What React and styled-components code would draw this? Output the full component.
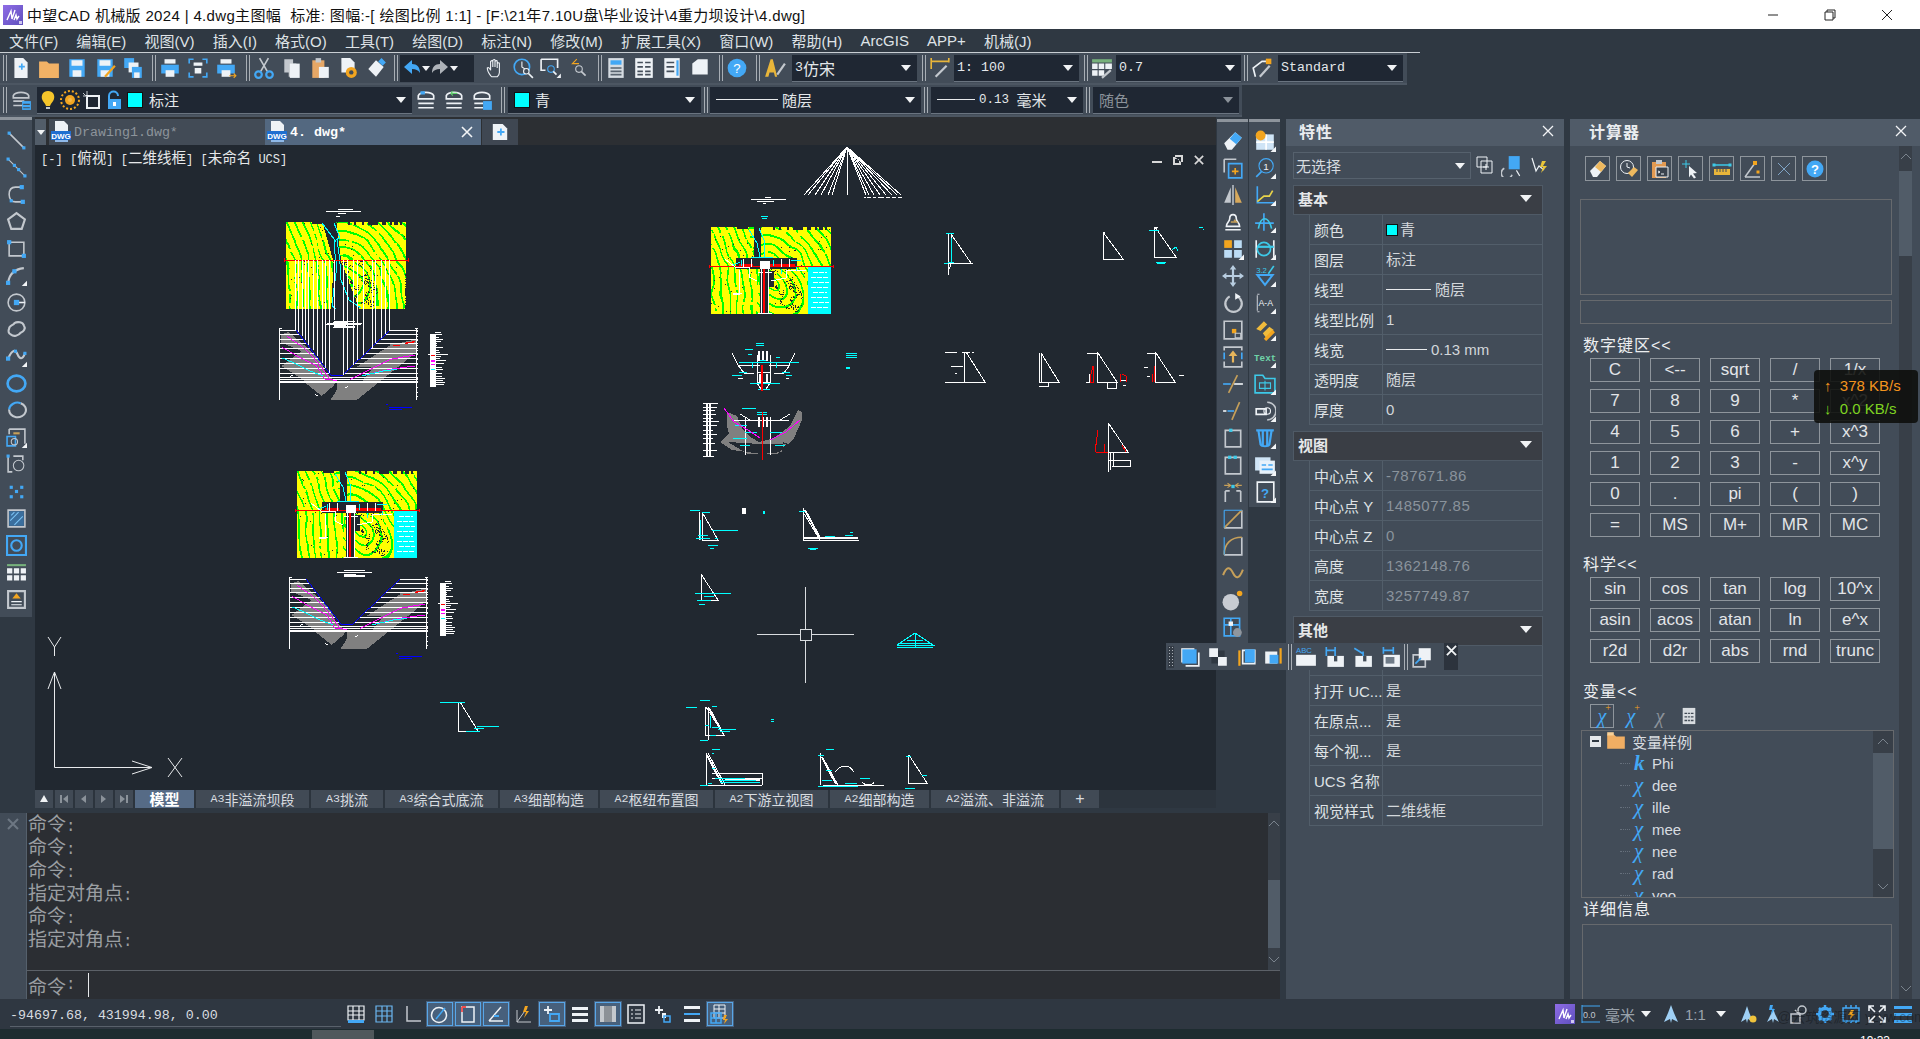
import React, { useMemo } from "react";
import styled, { createGlobalStyle } from "styled-components";

const UI_FONT = `"Liberation Sans", "Noto Sans CJK SC", sans-serif`;
const G = "#c3c8ce";
const B = "#43a8f5";
const W = "#eef2f6";
const O = "#f3a51f";
const T = "#c6a05a";
const C = "#3dc9e8";

const Global = createGlobalStyle`
  html, body { margin: 0; padding: 0; overflow: hidden; background: #2f3842; }
  * { box-sizing: border-box; }
`;

const Shell = styled.div`
  position: relative;
  width: 1920px;
  height: 1039px;
  display: flex;
  flex-direction: column;
  overflow: hidden;
  background: #2f3842;
  font-family: ${UI_FONT};
  color: #d8dce0;
`;

/* ---------- title + menu ---------- */
const TitleBar = styled.div`
  height: 29px;
  background: #fff;
  color: #111;
  display: flex;
  align-items: center;
  font-size: 15px;
  white-space: pre;
  padding-left: 3px;
`;
const TitleText = styled.span`
  margin-left: 4px;
  letter-spacing: 0.34px;
`;
const WinButtons = styled.div`
  margin-left: auto;
  display: flex;
  padding-right: 5px;
`;
const WinButton = styled.div`
  width: 57px;
  display: flex;
  justify-content: center;
`;
const MenuBar = styled.div`
  height: 24px;
  background: #2f3842;
  border-bottom: 1px solid #c9ced3;
  display: flex;
  align-items: center;
  gap: 18.2px;
  padding-left: 9px;
  font-size: 15px;
  color: #dfe3e7;
  width: 1420px;
`;

/* ---------- toolbars ---------- */
const ToolRow = styled.div`
  height: ${p => p.$h}px;
  width: ${p => p.$w}px;
  background: #424c58;
  display: flex;
  align-items: center;
  padding-left: 3px;
  border-bottom: 2px solid #4c5662;
`;
const Sep = styled.div`
  width: 4px;
  height: 26px;
  margin-left: ${p => p.$ml || 0}px;
  border-left: 1px solid #a8aeb5;
  border-right: 1px solid #a8aeb5;
  flex-shrink: 0;
`;
const ToolBtn = styled.div`
  width: 28px;
  height: 28px;
  flex-shrink: 0;
  margin-left: ${p => p.$ml || 0}px;
  display: flex;
  align-items: center;
  justify-content: center;
`;
const UndoGroup = styled.div`
  width: 74px;
  height: 27px;
  margin: 0 0 0 2px;
  background: #202833;
  display: flex;
  align-items: center;
  padding-left: 2px;
  flex-shrink: 0;
`;
const DownTri = styled.i`
  display: block;
  width: 0;
  height: 0;
  border-left: ${p => p.$s || 4}px solid transparent;
  border-right: ${p => p.$s || 4}px solid transparent;
  border-top: ${p => (p.$s || 4) + 1}px solid ${p => p.$c || "#f1f3f5"};
  flex-shrink: 0;
  margin-left: ${p => (p.$auto ? "auto" : "0")};
`;
const Combo = styled.div`
  width: ${p => p.$w}px;
  height: 27px;
  margin-left: ${p => p.$ml || 0}px;
  flex-shrink: 0;
  background: #1f2733;
  border-bottom: 1px solid #6a7480;
  display: flex;
  align-items: center;
  padding: 0 6px 0 ${p => p.$pl || 3}px;
  color: ${p => p.$dim ? "#8b929a" : "#e4e7ea"};
  white-space: pre;
`;
const Swatch = styled.i`
  display: block;
  width: ${p => p.$s || 16}px;
  height: ${p => p.$s || 16}px;
  flex-shrink: 0;
  background: #00ffff;
  border: 1px solid #111;
  margin: 0 ${p => p.$mr || 5}px 0 ${p => p.$ml || 0}px;
`;
const Rule = styled.i`
  display: block;
  width: ${p => p.$w}px;
  height: 1px;
  background: #e8eaec;
  flex-shrink: 0;
  margin-right: 4px;
`;
const LayerIcons = styled.div`
  display: flex;
  gap: 2px;
  margin-right: 3px;
`;

/* ---------- simsun-like text: half-width latin, full-width CJK ---------- */
const HalfRun = styled.span`
  font-family: "Liberation Mono", monospace;
  font-size: ${p => p.$size * 0.833}px;
`;
const FullRun = styled.span`
  font-family: "Noto Sans CJK SC", sans-serif;
  font-size: ${p => p.$size}px;
  font-weight: ${p => p.$bold ? 700 : 400};
`;
const Sim = ({ size = 16, bold, children }) =>
  String(children)
    .split(/([\u3000-\u9fff]+)/)
    .filter(Boolean)
    .map((t, i) =>
      /[\u3000-\u9fff]/.test(t) ? (
        <FullRun key={i} $size={size} $bold={bold}>{t}</FullRun>
      ) : (
        <HalfRun key={i} $size={size}>{t}</HalfRun>
      )
    );

/* ---------- icons ---------- */
const St = ({ d, c = G, w = 1.5, f = "none" }) => <path d={d} stroke={c} strokeWidth={w} fill={f} />;
const Fl = ({ d, c = W }) => <path d={d} fill={c} />;
const Dot = ({ x, y, s = 3, c = B }) => <rect x={x - s / 2} y={y - s / 2} width={s} height={s} fill={c} />;
const Flyout = () => <Fl d="M20 15v5h-5z" c="#f4f6f8" />;

const Ic = ({ s = 22, children, fly }) => (
  <svg width={s} height={s} viewBox="0 0 20 20">
    {children}
    {fly && <Flyout />}
  </svg>
);

const page = (
  <>
    <Fl d="M4 1h8l4 4v14H4z" c={W} />
    <Fl d="M8 8h2V6h1.500v2h2v1.500h-2v2H10v-2H8z" c={B} />
  </>
);
const floppy = (
  <>
    <Fl d="M3 2h14v16H3z" c={B} />
    <Fl d="M5 3h10v5H5zM6 12h8v6H6z" c={W} />
  </>
);
const printer = (
  <>
    <Fl d="M5 2h10v4H5z" c={W} />
    <Fl d="M2 7h16v8H2z" c={B} />
    <Fl d="M6 12h8v6H6z" c={W} />
  </>
);
const tb1 = [
  page,
  <Fl d="M1 4h7l2 2h9v13H1z" c="#f2b266" />,
  floppy,
  <>{floppy}<St d="M19 8L10 18" c={O} w={2} /></>,
  <>
    <Fl d="M2 1h9v9H2z" c={B} />
    <Fl d="M6 5h9v9H6z" c={W} />
    <Fl d="M9 9h9v10H9z" c={B} />
    <Fl d="M11 14h5v5h-5z" c={W} />
  </>,
  "sep:5",
  printer,
  <>
    <St d="M2 6V2h4M14 2h4v4M18 14v4h-4M6 18H2v-4" c={B} />
    <Fl d="M6 5h8v3H6zM7 10h6v5H7z" c={W} />
  </>,
  <>{printer}<St d="M13 17h6M17 15l2 2-2 2" c={O} w={1} /></>,
  "sep:6",
  <>
    <St d="M6 1l7 12M14 1L7 13" c={G} />
    <circle cx="5" cy="16" r="3" fill="none" stroke={B} strokeWidth="2" />
    <circle cx="15" cy="16" r="3" fill="none" stroke={B} strokeWidth="2" />
  </>,
  <>
    <Fl d="M3 2h8v4h3v-2h0v14H7v-4H3z" c={G} />
    <Fl d="M8 6h9v13H8z" c={W} />
  </>,
  <>
    <Fl d="M3 3h11v16H3z" c="#e6a766" />
    <Fl d="M6 1h5v4H6z" c={G} />
    <Fl d="M9 9h9v10H9z" c={W} />
  </>,
  <>
    <Fl d="M4 1h8l4 4v9H4z" c={W} />
    <circle cx="13" cy="14" r="5" fill={O} />
    <circle cx="13" cy="14" r="2" fill="#424c58" />
  </>,
  <>
    <Fl d="M3 11l7-8 7 6-7 9z" c={W} />
    <Fl d="M12 4l3-3 4 4-3 3z" c={B} />
  </>,
  "sep:4",
  "undo",
  <>
    <St d="M6 17c-3-4-3-6-3-7 1-1 2 0 3 2V4c1-1 2-1 2 0v5V3c1-1 2-1 2 0v6V4c1-1 2-1 2 0v6V6c1-1 2-1 2 0v8c0 2-1 3-2 4H7z" c={W} w={1} />
  </>,
  <>
    <circle cx="9" cy="9" r="7" fill="none" stroke={B} strokeWidth="1.500" />
    <St d="M9 4v5l3 2" c={W} w={1} />
    <circle cx="13" cy="13" r="2.500" fill="#424c58" stroke={W} />
    <St d="M15 15l4 4" c={W} />
  </>,
  <>
    <St d="M1 2h15v8M1 2v10h4" c={W} />
    <circle cx="10" cy="11" r="3" fill="none" stroke={B} />
    <St d="M12 13l3 3" c={W} />
    <Fl d="M19 15v4h-4z" />
  </>,
  <>
    <St d="M8 2L4 6h6M6 4l-2 2" c={O} w={1} />
    <circle cx="10" cy="11" r="3" fill="none" stroke={G} />
    <St d="M12 13l4 4" c={G} />
  </>,
  "sep:5",
  <>
    <Fl d="M3 1h14v18H3z" c="#d6dce2" />
    <Fl d="M5 3h10v4H5z" c={B} />
    <St d="M5 10h10M5 13h10M5 16h10" c="#596470" w={1.500} />
  </>,
  <>
    <Fl d="M2 1h16v18H2z" c={W} />
    <St d="M4 5h5M11 5h5M4 9h5M11 9h5M4 13h5M11 13h5M4 16h5M11 16h5" c="#454f5b" />
  </>,
  <>
    <Fl d="M3 1h14v18H3z" c={W} />
    <Fl d="M14 3h2v14h-2z" c={B} />
    <St d="M5 5h7M5 9h7M5 13h7" c="#454f5b" />
  </>,
  <Fl d="M3 6l5-4h9v14H3z" c={W} />,
  "sep:5",
  <>
    <circle cx="10" cy="10" r="8.500" fill={B} />
    <text x="10" y="14.500" textAnchor="middle" fontSize="12" fontFamily="Liberation Sans" fill="#fff">?</text>
  </>,
];

const iconLayers = (
  <>
    <St d="M3 6c2-4 12-4 14 0v2H3zM3 11h10M3 15h10" c={G} />
    <Fl d="M11 11h8v8h-8z" c={B} />
    <St d="M12 14h6M12 17h6" c="#424c58" w={1} />
  </>
);

const leftIcons = [
  <><St d="M3 3l14 14" /><Dot x={3} y={3} /><Dot x={17} y={17} /></>,
  <><St d="M2 2l16 16" c={G} w={1} /><Dot x={2} y={2} /><Dot x={8} y={8} /><Dot x={12} y={12} /><Dot x={18} y={18} /></>,
  <><St d="M15 3H9C4 3 3 7 3 10c0 5 3 7 6 7h8" /><Dot x={15} y={3} s={4} /><Dot x={5} y={16} s={3} /><Dot x={16} y={17} s={4} /></>,
  <St d="M10 2l8 6-3 9H5L2 8z" c={G} w={2} />,
  <><St d="M3 4h14v13H3z" /><Dot x={3} y={4} s={4} /><Dot x={17} y={17} s={4} /></>,
  <><St d="M2 17C3 9 8 4 17 3" w={2} /><Dot x={2} y={17} s={4} /><Dot x={8} y={6} s={4} /><Flyout /></>,
  <><circle cx="10" cy="10" r="8" fill="none" stroke={G} strokeWidth="1.500" /><St d="M10 10h8" c={W} /><Dot x={10} y={10} s={5} /></>,
  <St d="M3 9c0-3 4-3 5-5 3-2 8-1 9 2 2 3 0 6-3 7-2 3-7 4-9 2-3-1-3-4-2-6z" w={2} />,
  <><St d="M2 12c4-9 7-9 9-4s5 5 7-1" w={2} c={G} /><Dot x={2} y={12} s={4} /><Dot x={9} y={5} s={3} /><Dot x={18} y={7} s={3} /><Flyout /></>,
  <ellipse cx="10" cy="10" rx="8.500" ry="7.500" fill="none" stroke={B} strokeWidth="2.500" />,
  <><St d="M14 3a8 7 0 1 1-11 6" w={2} c={G} /><St d="M3 9a8 7 0 0 1 11-6" c={B} w={2} /></>,
  <><St d="M3 2h15v14" /><St d="M3 2v5" /><St d="M1 9h8v9H1z" c={B} /><circle cx="8" cy="14" r="3" fill="none" stroke={G} /><St d="M7 6h6" c={T} w={2} /><Flyout /></>,
  <><St d="M2 2v15h4M2 2" /><Dot x={2} y={2} /><circle cx="12" cy="11" r="5" fill="none" stroke={G} /><St d="M7 2h9v4" /></>,
  <><Dot x={5} y={6} /><Dot x={15} y={6} /><Dot x={10} y={10} /><Dot x={5} y={15} /><Dot x={15} y={15} /></>,
  <><St d="M2 2h16v16H2z" /><Fl d="M3 3h14v14H3z" c="#3b6f9e" /><St d="M4 12L12 4M8 16l8-8M5 7l3-3" c="#7cc4f5" w={1} /></>,
  <><St d="M1 1h18v18H1z" c={B} w={2} /><circle cx="10" cy="10" r="5" fill="none" stroke={B} strokeWidth="2" /></>,
  <><Fl d="M1 2h18v2H1z" c="#77b17c" /><Fl d="M1 6h5v5H1zM7.500 6h5v5h-5zM14 6h5v5h-5zM1 12.500h5v5H1zM7.500 12.500h5v5h-5zM14 12.500h5v5h-5z" c={W} /></>,
  <><St d="M2 2h16v16H2z" w={2} /><St d="M5 12h10M5 15h10" c={W} w={1} /><Fl d="M10 4l4 5H6z" c={O} /></>,
];

const dockA = [
  <><Fl d="M2 12L12 2l6 5-9 11H5z" c={W} /><Fl d="M12 2l6 5-5 6-6-5z" c={B} /></>,
  <><St d="M2 2h11M2 2v12" /><St d="M6 6h12v13H6z" c={B} /><St d="M12 10v6M9 13h6" c={O} /></>,
  <><Fl d="M2 17L8 3v14z" c={G} /><St d="M10 1v18" c={W} w={1} /><Fl d="M12 3l6 14h-6z" c="#d7a95c" /></>,
  <><St d="M3 17h14M4 14c0-4 3-4 3-7 0-5 6-5 6 0 0 3 3 3 3 7z" c={W} /><St d="M8 10h5l-2-2" c={T} /></>,
  <><Fl d="M2 2h7v7H2z" c={O} /><Fl d="M11 2h7v7h-7zM2 11h7v7H2zM11 11h7v7h-7z" c="#bcdcf5" /><Flyout /></>,
  <><St d="M10 2v16M2 10h16" c="#b8cde0" w={2} /><Fl d="M10 0l3 4H7zM10 20l3-4H7zM0 10l4-3v6zM20 10l-4-3v6z" c="#b8cde0" /></>,
  <><St d="M14 4a7.500 7.500 0 1 1-7 0" c={G} w={2} /><Fl d="M12 1l5 3-5 3z" c={W} /></>,
  <><St d="M2 2h16v16H2z" /><Dot x={11} y={11} s={4} c={O} /><St d="M12 13h5v4h-5z" c={G} w={1} /></>,
  <><St d="M2 4V1h16v3M2 14v5h16v-5" /><Fl d="M10 4l4 5h-3v6H9V9H6z" c="#e7b55b" /><St d="M2 6v6M18 6v6" c={B} /></>,
  <><St d="M1 10h7" c={B} w={1.500} /><St d="M11 10h8" c={W} /><St d="M14 2L6 18" c={T} /></>,
  <><St d="M1 10h3" c={W} /><St d="M5 10h6" c={B} /><St d="M16 2L9 18" c={T} /></>,
  <><St d="M3 3h14v15H3z" /><Dot x={8} y={3} c={C} s={3} /></>,
  <><St d="M3 3h14v15H3z" /><Dot x={7} y={3} c={C} s={3} /><Dot x={12} y={3} c={C} s={3} /></>,
  <><St d="M3 9v10M17 9v10M3 9h4M13 9h4" /><St d="M2 4h5M5 2l3 2-3 2M18 4h-5M15 2l-3 2 3 2" c={T} w={1} /><Dot x={10} y={5} c={C} /></>,
  <><St d="M2 18h16V2" c={G} /><St d="M2 18L18 2" c={T} /><St d="M2 2h16M2 2v16" c={B} w={1} /></>,
  <><St d="M18 2v16H2" c={G} /><St d="M2 18C2 8 8 2 18 2" c={T} /><St d="M2 2v16" c={B} w={1} /></>,
  <St d="M1 12c3-8 6-8 9-2s6 5 9-3" c={T} w={1.800} />,
  <><circle cx="8" cy="12" r="7.500" fill="#c8ccd2" /><circle cx="16" cy="4" r="2.500" fill={O} /></>,
  <><St d="M2 2h14v16H2zM8 2v16M2 8h14" c={B} /><Dot x={8} y={7} s={4} c={W} /><circle cx="14" cy="15" r="4" fill="#8f969e" /></>,
];
const dockB = [
  <><Fl d="M2 4h16v14H2z" c="#cfe4f6" /><St d="M2 11h16M11 4v14" c="#fff" /><circle cx="6" cy="5" r="4.500" fill={O} /></>,
  <><circle cx="11" cy="8" r="6.500" fill="none" stroke={B} /><St d="M7 13l-5 5" c={B} /><text x="11" y="11.500" fontSize="9" textAnchor="middle" fill={W} fontFamily="Liberation Sans">1</text></>,
  <><St d="M3 2v15h15" c={B} /><St d="M3 16l6-5h5l3-5" c="#e8d34a" /></>,
  <><St d="M1 11h17M9 2v16" c={B} /><St d="M4 16c2-12 9-12 12 0" c={C} /></>,
  <><St d="M2 2v16M18 2v16" c={W} /><circle cx="9" cy="10" r="6" fill="none" stroke={C} strokeWidth="1.500" /><St d="M3 8h15" c={C} w={2} /></>,
  <><St d="M3 9h14L10 18z" c={B} w={1.800} /><St d="M13 8l5-7" c={C} /><text x="2" y="7" fontSize="7" fill={C} fontFamily="Liberation Sans">3.2</text></>,
  <><St d="M3 2h2M3 18h2M3 3v14" c={G} w={1} /><text x="4" y="13" fontSize="8" fill={W} fontFamily="Liberation Sans">A-A</text></>,
  <><Fl d="M2 9l7-7 3 3-6 6zM8 13l6-6 4 3-7 7z" c="#f0bb3c" /><St d="M10 19L18 11" c={O} w={3} /></>,
  <text x="0" y="14" fontSize="8.500" fontFamily="Liberation Mono" fontWeight="700" fill="#6fd3a8">Text</text>,
  <><St d="M1 2h7l2 3h9v13H1z" c={C} /><St d="M5 9h10v5H5zM10 7v9" c={C} w={1} /></>,
  <><St d="M12 2a8 8 0 1 1 0 16" c={G} /><St d="M2 8h9v5H2z" c={W} /><circle cx="12" cy="10" r="3" fill="none" stroke={W} /></>,
  <><St d="M2 3h16M4 3l2 13c1 2 7 2 8 0l2-13M8 3v14M12 3v14" c={B} w={2} /></>,
  <><Fl d="M1 3h14v12H1z" c="#cfe4f6" /><Fl d="M5 6h14v12H5z" c="#e7f1fa" /><St d="M7 10h4M13 10h4M7 14h10" c={B} /></>,
  <><St d="M3 1h15v18H3z" c={W} /><text x="10" y="15" fontSize="12" fontWeight="700" textAnchor="middle" fill={B} fontFamily="Liberation Sans">?</text></>,
];

const calcIcons = [
  <><Fl d="M2 12L12 2l6 5-9 11H5z" c={W} /><Fl d="M12 2l6 5-5 6-6-5z" c="#eeb95f" /></>,
  <><circle cx="8" cy="8" r="6.500" fill="none" stroke={W} /><St d="M8 4v4l3 1" c={W} w={1} /><Fl d="M9 14l6-6 4 3-6 7z" c="#eeb95f" /></>,
  <><Fl d="M2 3h14v16H2z" c="#e39a52" /><Fl d="M6 1h6v4H6z" c={G} /><Fl d="M6 8h12v10H6z" c="#3a424d" /><St d="M6 8h12v10H6z" c={W} w={1} /><St d="M8 14l2-1-2-1M11 15h3" c={W} w={1} /></>,
  <><St d="M5 1v8M1 5h8" c={C} w={1} /><Fl d="M8 7l8 7-4 .5 3 4-2 1-3-4-2 3z" c={W} /></>,
  <><St d="M1 6h18" c={C} /><Dot x={2} y={6} s={3} c={C} /><Dot x={18} y={6} s={3} c={C} /><Fl d="M2 10h16v6H2z" c="#e8b53a" /><St d="M5 10v3M8 10v3M11 10v3M14 10v3" c="#424c58" w={1} /></>,
  <><St d="M2 18L12 4" c={G} /><St d="M2 18h15" c={G} /><Dot x={12} y={4} s={4} c={O} /><Dot x={15} y={13} s={3} c={O} /></>,
  <St d="M4 4l12 12M16 4L4 16" c="#7fa3c4" w={1} />,
  <><circle cx="10" cy="10" r="8.500" fill={B} /><text x="10" y="15" textAnchor="middle" fontSize="13" fontWeight="700" fontFamily="Liberation Sans" fill="#fff">?</text></>,
];

const floatGroups = [
  [
    <><Fl d="M2 2h12v13H2z" c={W} /><Fl d="M3 3h13v13H3z" c={B} /><St d="M6 18h12V6" c={W} /></>,
    <><Fl d="M2 2h8v8H2zM10 10h8v8h-8z" c={W} /><Fl d="M10 4h6v6h-6zM4 10h6v6H4z" c="#2f3842" /></>,
    <><St d="M7 4h11v12H7z" c={W} /><Fl d="M9 3h9v12H9z" c={B} /><St d="M4 4v14" c={O} w={2} /></>,
    <><Fl d="M2 5h11v11H2z" c={W} /><Fl d="M6 8h8v8H6z" c={B} /><St d="M16 2v14" c={O} w={2} /></>,
  ],
  [
    <><Fl d="M1 8h18v10H1z" c={W} /><text x="1" y="6.500" fontSize="7" fontFamily="Liberation Sans" fill={B}>ABC</text></>,
    <><Fl d="M4 9h15v10H4z" c={W} /><Fl d="M10 9h3v5h-3z" c="#424c58" /><St d="M3 1v8M11 1v8M3 4h8" c={B} /></>,
    <><Fl d="M4 9h15v10H4z" c={W} /><Fl d="M11 9h3v5h-3z" c="#424c58" /><St d="M3 2l8 5M11 5v4" c={B} /></>,
    <><Fl d="M4 8h15v11H4z" c={W} /><St d="M4 1v6M13 1v6M4 4h9" c={B} /><Fl d="M6 10h8v6H6z" c="#6f7b88" /></>,
  ],
  [
    <><St d="M2 8h11v11H2z" c={G} /><Fl d="M7 2h11v11H7z" c={W} /><St d="M4 16l5-5" c={B} /></>,
  ],
];

const statusIcons = [
  [<><St d="M2 2h16v14H2zM2 7h16M2 11h16M7 2v14M13 2v14" c={W} w={1.200} /><Fl d="M2 16h16v3H2z" c={B} /></>, 0],
  [<St d="M2 2h16v16H2zM2 7h16M2 12h16M8 2v16M13 2v16" c="#6cb7f2" w={1.200} />, 0],
  [<><St d="M5 2v15h14" c={G} w={1.500} /><St d="M5 12h0" /></>, 0],
  [<><circle cx="9" cy="11" r="7.500" fill="none" stroke={W} strokeWidth="1.500" /><St d="M6 15L15 4" c={B} w={1.500} /></>, 1],
  [<><St d="M4 3h12v15H4z" c={W} w={1.500} /><St d="M4 3v5M4 3h4" c="#ee4d4d" w={1.800} /></>, 1],
  [<><St d="M3 17L15 3M3 17h14" c={W} w={1.500} /><St d="M8 12l5 0" c={B} w={2} /></>, 1],
  [<><St d="M3 18L13 4M3 18h14M3 18V6" c={G} w={1} /><Fl d="M11 2h3l-2 5h3l-5 7 2-6H9z" c={O} /></>, 0],
  [<><St d="M6 2v8M2 6h8" c={W} w={1.800} /><St d="M8 10h9v7H8z" c={B} w={1.800} /></>, 1],
  [<Fl d="M2 3h16v3H2zM2 9h16v3H2zM2 15h16v3H2z" c={W} />, 0],
  [<><Fl d="M2 2h16v16H2z" c="#c4c8cd" /><Fl d="M6 2h8v16H6z" c="#8c9197" /></>, 1],
  [<><St d="M2 1h16v18H2z" c={W} /><St d="M5 6h2M9 6h6M5 10h2M9 10h6M5 14h2M9 14h6" c={W} w={1} /></>, 0],
  [<><St d="M5 2v8M1 6h8" c={W} w={1.800} /><Fl d="M8 9h4v5H8z" c={W} /><St d="M10 12h6v6h-6z" c={B} w={1.500} /></>, 0],
  [<><Fl d="M2 2h16v3H2zM2 15h16v3H2z" c={W} /><Fl d="M2 9h16v2H2z" c={B} /></>, 0],
  [<><St d="M4 1h11v13H4zM4 5h11M4 9h11M9 1v13" c={W} w={1} /><St d="M1 9h10v10H1zM1 14h10M6 9v10" c={B} /><Fl d="M14 11h3l-2 4h3l-4 5 1-4h-2z" c={O} /></>, 1],
];

const statusRight = [
  <><Fl d="M10 2l2 6 4 10-5-3-1 4-1-4-5 3 4-10z" c="#9fd0f5" /><circle cx="16" cy="15" r="3.500" fill="#f0c33c" /></>,
  <><Fl d="M10 4l2 6 4 8-5-3-1 4-1-4-5 3 4-8z" c="#9fd0f5" /><Fl d="M7 1h3l-1 4h3l-4 6 1-5H6z" c={B} /></>,
  <><St d="M2 10h9v9H2z" c={G} /><circle cx="13" cy="6" r="4" fill="none" stroke={G} strokeWidth="1.500" /><St d="M6 6l5 5" c={G} /></>,
  <><circle cx="10" cy="10" r="5.500" fill="none" stroke={B} strokeWidth="3.500" /><St d="M10 1v3M10 16v3M1 10h3M16 10h3M4 4l2 2M14 14l2 2M16 4l-2 2M6 14l-2 2" c={B} w={2.500} /></>,
  <><St d="M2 4h16v13H2zM5 1v3M10 1v3M15 1v3M5 17v2M10 17v2M15 17v2" c={B} /><Fl d="M10 6h3l-2 4h3l-5 5 1-4H7z" c={O} /></>,
  <St d="M2 7V2h5M2 2l6 6M13 2h5v5M18 2l-6 6M2 13v5h5M2 18l6-6M18 13v5h-5M18 18l-6-6" c={W} w={1.600} />,
  <Fl d="M1 2h18v3H1zM1 9h18v3H1zM1 16h18v3H1z" c={B} />,
];

const AppLogo = ({ s = 20, id = "zw" }) => (
  <svg width={s} height={s} viewBox="0 0 20 20">
    <defs>
      <linearGradient id={id} x1="0" y1="0" x2="1" y2="1">
        <stop offset="0" stopColor="#8f6ce6" />
        <stop offset="1" stopColor="#5f50bd" />
      </linearGradient>
    </defs>
    <rect width="20" height="20" fill={`url(#${id})`} />
    <path d="M4 15L8 6l1 8 3-9M11 15l2-5 1 4 2-3" stroke="#fff" strokeWidth="1.400" fill="none" />
    <rect x="16" y="16" width="3" height="3" fill="#cfc8f0" />
  </svg>
);

/* ---------- main layout ---------- */
const Main = styled.div`
  position: relative;
  height: 882px;
  display: flex;
`;
const LeftArea = styled.div`
  width: 1280px;
  display: flex;
  flex-direction: column;
`;
const Workspace = styled.div`
  height: 691px;
  display: flex;
`;
const LeftTools = styled.div`
  width: 32px;
  height: 500px;
  margin-right: 3px;
  padding-top: 7px;
  background: #424c58;
  flex-shrink: 0;
  position: relative;
  border-top: 3px solid #8d949c;
`;
const StackBtn = styled.div`
  height: 27px;
  display: flex;
  align-items: center;
  justify-content: center;
`;
const CanvasCol = styled.div`
  width: 1181px;
  display: flex;
  flex-direction: column;
`;
const DocTabs = styled.div`
  height: 28px;
  background: #2c2f33;
  display: flex;
  align-items: flex-end;
`;
const DocDrop = styled.div`
  width: 11px;
  height: 26px;
  margin-right: 3px;
  background: #525d69;
  display: flex;
  align-items: center;
  justify-content: center;
`;
const DocTab = styled.div`
  width: 216px;
  height: 26px;
  background: ${p => (p.$on ? "#536880" : "#424b56")};
  color: ${p => (p.$on ? "#fff" : "#8d949b")};
  font-weight: ${p => (p.$on ? 700 : 400)};
  display: flex;
  align-items: center;
  padding-left: 1px;
  gap: 2px;
`;
const DocClose = styled.span`
  margin-left: auto;
  margin-right: 8px;
  display: flex;
`;
const DocAdd = styled.div`
  width: 36px;
  height: 26px;
  margin-left: 1px;
  background: #3f4752;
  display: flex;
  align-items: center;
  justify-content: center;
`;
const Canvas = styled.div`
  position: relative;
  width: 1181px;
  height: 645px;
  background: #212830;
  color: #e6e8ea;
  overflow: hidden;
`;
const CanvasSvg = styled.svg`
  display: block;
  shape-rendering: crispEdges;
`;
const ViewLabel = styled.div`
  position: absolute;
  left: 6px;
  top: 2px;
  white-space: pre;
  line-height: 20px;
`;
const ViewCtrl = styled.div`
  position: absolute;
  right: 12px;
  top: 10px;
  display: flex;
  gap: 11px;
`;
const LayoutTabs = styled.div`
  height: 18px;
  display: flex;
  gap: 2px;
  background: #2c343d;
`;
const NavBtn = styled.div`
  width: 18px;
  background: #414a55;
  display: flex;
  align-items: center;
  justify-content: center;
`;
const LayoutTab = styled.div`
  width: ${p => p.$w}px;
  background: ${p => (p.$on ? "#566b86" : "#414a55")};
  color: ${p => (p.$on ? "#fff" : "#d8dce0")};
  display: flex;
  align-items: center;
  justify-content: center;
  line-height: 18px;
`;
const DockPair = styled.div`
  display: flex;
  gap: 1px;
  margin-left: 1px;
  align-items: flex-start;
`;
const DockCol = styled.div`
  width: 31px;
  height: ${p => p.$h}px;
  padding-top: 5px;
  background: #424c58;
  border-top: 3px solid #8d949c;
  margin-top: 2px;
`;
const Command = styled.div`
  height: 186px;
  margin-top: 5px;
  display: flex;
  background: #2b2e33;
`;
const CmdStrip = styled.div`
  width: 27px;
  background: #414b57;
  border-right: 1px solid #55606c;
  display: flex;
  justify-content: center;
  padding-top: 5px;
`;
const CmdBody = styled.div`
  flex: 1;
  display: flex;
  flex-direction: column;
  min-width: 0;
`;
const CmdHistory = styled.div`
  height: 158px;
  display: flex;
  border-bottom: 1px solid #5c6168;
`;
const CmdLines = styled.div`
  flex: 1;
  margin-top: -2px;
  padding-left: 1px;
  color: #9a9ea2;
`;
const CmdLine = styled.div`
  height: 23px;
  line-height: 23px;
  white-space: pre;
`;
const CmdInput = styled.div`
  flex: 1;
  display: flex;
  align-items: center;
  padding-left: 1px;
  color: #9a9ea2;
`;
const Caret = styled.i`
  width: 1px;
  height: 24px;
  background: #e8eaec;
  margin-left: 12px;
`;
const VScroll = styled.div`
  width: ${p => p.$w || 12}px;
  flex-shrink: 0;
  background: #383f48;
  display: flex;
  flex-direction: column;
  align-items: center;
  justify-content: space-between;
  position: relative;
`;
const ScrollThumb = styled.div`
  position: absolute;
  left: 0;
  right: 0;
  top: ${p => p.$top}px;
  height: ${p => p.$h}px;
  background: #515c68;
`;
const Chevron = styled.svg`
  display: block;
  margin: 7px 0;
`;
const Chev = ({ up }) => (
  <Chevron width="10" height="6" viewBox="0 0 10 6">
    <path d={up ? "M0 6L5 1l5 5" : "M0 0l5 5 5-5"} stroke="#7a838d" fill="none" />
  </Chevron>
);

/* ---------- panels ---------- */
const Panel = styled.div`
  width: ${p => p.$w}px;
  margin-left: ${p => p.$ml}px;
  margin-top: 2px;
  background: #424c58;
  display: flex;
  flex-direction: column;
  flex-shrink: 0;
  overflow: hidden;
`;
const PanelHead = styled.div`
  height: 27px;
  background: #505b68;
  display: flex;
  align-items: center;
  justify-content: space-between;
  padding: 0 ${p => p.$pr || 10}px 3px ${p => p.$pl || 13}px;
  font-family: "Noto Sans CJK SC", sans-serif;
  font-size: 16px;
  font-weight: 700;
  color: #e9ecef;
  letter-spacing: 1px;
  flex-shrink: 0;
`;
const XIcon = ({ s = 12, c = "#f2f4f6", w = 1.3 }) => (
  <svg width={s} height={s} viewBox="0 0 12 12">
    <path d="M1 1l10 10M11 1L1 11" stroke={c} strokeWidth={w} fill="none" />
  </svg>
);
const PropBody = styled.div`
  padding: 6px 0 0 7px;
  display: flex;
  flex-direction: column;
`;
const SelectRow = styled.div`
  display: flex;
  align-items: center;
  height: 27px;
  margin-bottom: 6px;
`;
const SelectBox = styled.div`
  width: 178px;
  height: 27px;
  border: 1px solid #56616d;
  display: flex;
  align-items: center;
  padding: 0 5px 0 2px;
  font-size: 15px;
`;
const SelectIcons = styled.div`
  display: flex;
  margin-left: 4px;
  gap: 6px;
`;
const SectionHead = styled.div`
  width: 250px;
  height: 30px;
  background: #3a3e45;
  border: 1px solid #4f5a66;
  display: flex;
  align-items: center;
  padding: 0 10px 4px 4px;
  font-weight: 700;
  font-size: 15px;
  color: #e6e8ea;
  margin-top: ${p => p.$mt || 0}px;
`;
const PropRow = styled.div`
  margin-left: 16px;
  width: 234px;
  height: 30px;
  display: grid;
  grid-template-columns: 73px 1fr;
  border-left: 1px solid #525e6a;
  border-bottom: 1px solid #525e6a;
  border-right: 1px solid #525e6a;
  font-size: 15px;
  line-height: 29px;
`;
const PropLabel = styled.div`
  padding: 1px 0 0 4px;
  border-right: 1px solid #525e6a;
  white-space: nowrap;
  overflow: hidden;
  color: #dfe2e5;
`;
const PropValue = styled.div`
  padding-left: 3px;
  color: ${p => (p.$dim ? "#8a939c" : "#d3d7db")};
  letter-spacing: ${p => (p.$num ? "0.5px" : "0")};
  display: flex;
  align-items: center;
  white-space: nowrap;
`;
const CalcWrap = styled.div`
  flex: 1;
  display: flex;
  min-height: 0;
  padding-right: 8px;
`;
const CalcBody = styled.div`
  width: 329px;
  flex-shrink: 0;
  padding: 10px 0 0 10px;
`;
const IconRow = styled.div`
  display: flex;
  gap: 6px;
  margin-left: 5px;
  height: 25px;
  margin-bottom: 18px;
`;
const IconBox = styled.div`
  width: 25px;
  height: 25px;
  border: 1px solid #8e959c;
  display: flex;
  align-items: center;
  justify-content: center;
`;
const OutBox = styled.div`
  width: 312px;
  height: ${p => p.$h}px;
  border: 1px solid #66696d;
  margin-bottom: ${p => p.$mb || 0}px;
  flex-shrink: 0;
`;
const CalcLabel = styled.div`
  height: 20px;
  line-height: 22px;
  font-size: 16px;
  letter-spacing: 1px;
  color: #eceef0;
  margin: ${p => p.$mt || 0}px 0 ${p => p.$mb || 0}px 3px;
`;
const KeyGrid = styled.div`
  display: grid;
  grid-template-columns: repeat(5, 50px);
  column-gap: 10px;
  grid-auto-rows: 24px;
  row-gap: 7px;
  margin-left: 10px;
`;
const Key = styled.div`
  border: 1px solid #8e959c;
  display: flex;
  align-items: center;
  justify-content: center;
  font-size: 17px;
  color: #e3e5e8;
`;
const VarTools = styled.div`
  display: flex;
  align-items: center;
  height: 24px;
  margin: 3px 0 2px 10px;
  gap: 5px;
`;
const VarBtn = styled.div`
  width: 24px;
  height: 24px;
  border: ${p => (p.$on ? "1px solid #8e959c" : "1px solid transparent")};
  display: flex;
  align-items: center;
  justify-content: center;
  font-family: "Liberation Serif", serif;
  font-style: italic;
  font-size: 20px;
  color: ${p => p.$c || B};
  position: relative;
`;
const Sup = styled.i`
  position: absolute;
  right: 2px;
  top: -3px;
  font-size: 10px;
  font-style: normal;
  color: ${O};
`;
const TreeBox = styled.div`
  width: 313px;
  height: 168px;
  margin-left: 1px;
  border: 1px solid #66696d;
  display: flex;
  overflow: hidden;
`;
const TreeList = styled.div`
  flex: 1;
  margin-top: -1px;
  padding-left: 8px;
  overflow: hidden;
`;
const TreeHead = styled.div`
  height: 22px;
  display: flex;
  align-items: center;
  font-size: 15px;
`;
const TreeName = styled.span`
  margin-left: 5px;
`;
const MinusBox = styled.i`
  width: 11px;
  height: 11px;
  background: #e4e7ea;
  margin-right: 4px;
  display: flex;
  align-items: center;
  justify-content: center;
  &::after {
    content: "";
    width: 7px;
    height: 2px;
    background: #2f3842;
  }
`;
const TreeRow = styled.div`
  height: 22px;
  display: flex;
  align-items: center;
  margin-left: 30px;
  font-size: 15px;
  &::before {
    content: "";
    width: 10px;
    border-top: 1px dotted #66707c;
    margin-right: 4px;
  }
`;
const VarMark = styled.span`
  width: 18px;
  font-family: "Liberation Serif", serif;
  font-size: 21px;
  font-style: italic;
  font-weight: ${p => (p.$k ? 700 : 400)};
  color: ${B};
  line-height: 22px;
`;
const DetailBox = styled.div`
  width: 310px;
  height: 90px;
  margin-left: 2px;
  border: 1px solid #66696d;
`;

/* ---------- overlays ---------- */
const FloatBar = styled.div`
  position: absolute;
  left: 1166px;
  top: 526px;
  width: 292px;
  height: 27px;
  background: #424c58;
  display: flex;
  align-items: center;
  padding-left: 2px;
`;
const FloatGrip = styled.i`
  width: 6px;
  height: 22px;
  margin-right: 2px;
  background-image: radial-gradient(#aab0b6 0.7px, transparent 0.8px);
  background-size: 3px 3px;
  background-color: #333b45;
`;
const FloatIcon = styled.div`
  width: 28px;
  height: 24px;
  display: flex;
  align-items: center;
  justify-content: center;
`;
const FloatClose = styled.div`
  margin-left: auto;
  width: 14px;
  height: 27px;
  background: #2c333d;
  display: flex;
  justify-content: center;
  padding-top: 2px;
`;
const NetBadge = styled.div`
  position: absolute;
  left: 1814px;
  top: 370px;
  width: 104px;
  height: 53px;
  border-radius: 4px;
  background: rgba(12, 14, 10, 0.88);
  padding: 4px 0 0 10px;
  font-size: 15px;
  line-height: 23px;
  white-space: pre;
`;
const NetLine = styled.div`
  color: ${p => p.$c};
`;

/* ---------- status ---------- */
const StatusBar = styled.div`
  position: relative;
  height: 30px;
  background: #2f3741;
  display: flex;
  align-items: center;
`;
const Coords = styled.div`
  width: 331px;
  height: 26px;
  margin: 0 0 0 10px;
  line-height: 22px;
  padding-top: 2px;
  border-bottom: 1px solid #59616b;
  color: #d9dde0;
  white-space: pre;
  flex-shrink: 0;
`;
const StatusIcons = styled.div`
  display: flex;
  margin-left: 1px;
`;
const StatusBtn = styled.div`
  width: 28px;
  height: 26px;
  display: flex;
  align-items: center;
  justify-content: center;
  background: ${p => (p.$on ? "#47607c" : "transparent")};
  outline: ${p => (p.$on ? "1px solid #58a6e8" : "none")};
  outline-offset: -2px;
`;
const StatusRight = styled.div`
  position: absolute;
  left: 1555px;
  top: 0;
  bottom: 0;
  display: flex;
  align-items: center;
  color: #9aa3ac;
  font-size: 15px;
  white-space: pre;
`;
const StatusGap = styled.span`
  margin-left: ${p => p.$ml}px;
  display: flex;
  align-items: center;
`;
const Watermark = styled.div`
  position: absolute;
  left: 1777px;
  top: 7px;
  font-size: 14px;
  color: rgba(10, 12, 14, 0.38);
  white-space: pre;
`;
const TaskStrip = styled.div`
  height: 10px;
  background: #1e2c30;
  position: relative;
  overflow: hidden;
`;
const TaskThumb = styled.i`
  position: absolute;
  left: 312px;
  width: 62px;
  top: 1px;
  bottom: 0;
  background: #50585c;
`;
const Clock = styled.div`
  position: absolute;
  left: 1860px;
  top: 5px;
  font-size: 12px;
  color: #fff;
`;

/* ---------- drawing ---------- */
const hash = (x, y) => {
  const s = Math.sin(x * 127.1 + y * 311.7) * 43758.5453;
  return s - Math.floor(s);
};
const smooth = (x, y) => {
  const xi = Math.floor(x);
  const yi = Math.floor(y);
  const u = x - xi;
  const v = y - yi;
  const a = hash(xi, yi);
  const b = hash(xi + 1, yi);
  const c = hash(xi, yi + 1);
  const d = hash(xi + 1, yi + 1);
  const su = u * u * (3 - 2 * u);
  const sv = v * v * (3 - 2 * v);
  return a + (b - a) * su + (c - a) * sv + (a - b - c + d) * su * sv;
};

// site plan raster, contour lines on yellow, as run-length paths
function buildPlan(ox, oy, dam) {
  let yellow = "";
  let green = "";
  const W_ = 120;
  const H_ = 87;
  for (let y = 0; y < H_; y += 1) {
    let run = null;
    let runX = 0;
    const flush = endX => {
      if (run === "y") yellow += `M${ox + runX} ${oy + y}h${endX - runX}v1h-${endX - runX}z`;
      if (run === "g") green += `M${ox + runX} ${oy + y}h${endX - runX}v1h-${endX - runX}z`;
    };
    for (let x = 0; x <= W_; x += 1) {
      let cell = null;
      if (x < W_) {
        const L = y < 40 ? 36 + y * 0.28 : 47 - (y - 40) * 0.05;
        const R = y < 40 ? 50 + y * 0.12 : 55 + (y - 40) * 0.38;
        const dark = dam
          ? (y > 30 && y < 42 && x > 24 && x < 86) || (y >= 42 && x > 48 && x < 58) || (y >= 44 && x >= 58 && x < 63 && y < 60) || (y < 30 && x > 42 && x < 50)
          : x > L && x < R;
        const table = dam && x >= 97 && y >= 40;
        const ragged = (y < 3 && x > 60 && hash(Math.floor(x / 2), 7) > 0.5) || (y < 2 && x > 25 && x < 37) || (x > 118 && y > 50 && hash(x, y) > 0.4);
        if (!dark && !table && !ragged) {
          const n = smooth((x + ox) / 14, (y + oy) / 14) * 5 + smooth((x + ox) / 4, (y + oy) / 4) * 0.5;
          const d = x <= L ? L - x + y * 0.1 + n : Math.hypot(x - R, (y - 58) * 0.85) + n;
          const f = d / 7.5;
          const broken = hash(Math.floor(x / 3) + ox, Math.floor(y / 3) + oy) > 0.92;
          const inV = x > R && x - R < 26 && y > 34;
          const speck = (inV && hash(x + 3, y + 5) > 0.72 && smooth(x / 5, y / 5) > 0.55) || hash(x * 1.7 + oy, y * 1.3) > 0.995;
          if (!speck) cell = f - Math.floor(f) < 0.23 && !broken ? "g" : "y";
        }
      }
      if (cell !== run) {
        flush(x);
        run = cell;
        runX = x;
      }
    }
  }
  return { yellow, green };
}

const Section = ({ tx, ty }) => {
  const rows = [58, 72, 85, 99, 114, 129, 143, 157, 172, 187];
  const leftX = y => 138 + ((y - 57) * 107) / 138;
  const rightX = y => 420 - ((y - 57) * 145) / 138;
  const ticks = [];
  for (let y = 62; y < 265; y += 14) ticks.push(`M86 ${y}h4M497 ${y}h6`);
  const table = [];
  for (let i = 0; i < 24; i += 1) {
    const y = 72 + i * 6.5;
    table.push(`M541 ${y}h${18 + hash(i, 3) * 28}`);
  }
  return (
    <g transform={`translate(${tx} ${ty}) scale(0.3333)`}>
      <g fill="#808080">
        <path d="M93 70l22-7 60 50 40 40 12 32 28 25-90 0-70-45 60-45-62-25z" />
        <path d="M165 215h90l-5 10-35 30z" />
        <path d="M500 85v38L322 266h-80l32-50h58l92-115zM262 213h12v30h-12z" />
        <path d="M320 168l100-65v-8h75v25l-120 50z" />
      </g>
      <path
        d={
          rows.map(y => `M88 ${y}H${leftX(y)}M${rightX(y)} ${y}H503`).join("") +
          "M88 201H503M88 207H503M88 213H503M88 215H503M90 50V266M500 50V266M86 52h10M494 52h10" +
          ticks.join("") +
          "M252 32h63M232 38h103M252 43h36M252 47h63M252 51h63"
        }
        stroke="#fff"
        strokeWidth="3"
        fill="none"
      />
      <path d="M138 57L245 195H275L420 57" stroke="#0000ff" strokeWidth="3" fill="none" />
      <path d="M95 108l55 32 50 25 25 40 35 3M110 75l50 35 30 30 25 30 25 35M300 205l60-30 60-30 75-13M340 193l80-18 75-10" stroke="#ff00ff" strokeWidth="3" fill="none" />
      <path d="M95 140l35 15 50 25 40 15M335 195l65-15 40-5" stroke="#00ffff" strokeWidth="3" fill="none" />
      <path d="M430 103h20M465 97l30-5" stroke="#ff0000" strokeWidth="4" fill="none" />
      <path d="M417 290h68M417 295h38M408 281h7" stroke="#0000ff" strokeWidth="3" fill="none" />
      <path d="M130 190l-12 10M285 232l10-8M195 250l10 5" stroke="#fff" strokeWidth="3" fill="none" />
      <path d="M541 72h18v156h-18z" fill="#fff" />
      <path d={table.join("") + "M535 130h58M555 65h18"} stroke="#fff" strokeWidth="3" fill="none" />
      <path d="M544 135h12" stroke="#ff0000" strokeWidth="3" />
      <path d="M544 150h10M544 160h10" stroke="#ff00ff" strokeWidth="4" />
      <path d="M544 176h12" stroke="#00ffff" strokeWidth="4" />
    </g>
  );
};

const PlanOverlayDam = ({ x, y }) => (
  <g transform={`translate(${x} ${y})`}>
    <path d="M97 40h23v47H97z" fill="#00ffff" />
    <path d="M102 45h14M100 50h18M102 55h16M100 60h18M102 65h14M100 70h18M102 75h16M100 80h18" stroke="#fff" fill="none" strokeDasharray="5 1" />
    <path d="M-2 39H122M-2 38v3M122 38v3" stroke="#ff0000" fill="none" />
    <path d="M28 38H42M50 38H84" stroke="#ff0000" strokeWidth="3" />
    <path d="M50 39V87M57 39V87M47 45h14M47 86h14" stroke="#fff" fill="none" />
    <path d="M53 40v46" stroke="#ff0000" strokeWidth="2" fill="none" />
    <path d="M49 34h10v8H49z" fill="#fff" />
    <path d="M14 32l10 8h14v10l8 4M95 43H75v8l-15 3M28 43v24h-6l9-1M32 32v8M40 32v8M70 32v8M78 32v8" stroke="#fff" fill="none" />
    <path d="M38 3l8 13 3 14M48 1l5 12 1 17M40 30h22M22 38l7-3M70 42v5M80 33h10M85 40v4M30 33v6M62 33v6" stroke="#00ffff" fill="none" />
  </g>
);
const PlanOverlaySite = ({ x, y }) => (
  <g transform={`translate(${x} ${y})`}>
    <path d="M36 1l12 16 1 15 2 12-3 22-2 18 4 3M48 1l6 15-3 1-3 4M51 17l2 15 1 10 1 16 8 20 12 8" stroke="#00ffff" fill="none" />
    <path d="M-2 38H122M-2 36v4M122 36v4" stroke="#ff0000" fill="none" />
  </g>
);

const drawing = {
  white: [
    // fan
    "M847 147V195M847 147L804 195M847 147L808 195M847 147L815 195M847 147L821 195M847 147L828 195M847 147L832 195",
    "M847 147L866 195M847 147L869 195M847 147L874 195M847 147L880 195M847 147L886 195M847 147L892 195M847 147L897 195M847 147L901 195",
    "M864 197h2M867 197h4M873 197h3M878 197h6M886 197h4M892 197h4M898 197h4",
    // plan 1 verticals
    "M295 260V330M298 260V332M302 260V336M305 260V340M308 260V345M313 260V350M317 260V356M322 260V363M325 260V368M329 260V373M334 260V320",
    "M343 260V375M347 260V370M353 260V365M357 260V360M363 260V355M372 260V348M375 260V343M381 260V338M385 260V334M389 260V331",
    "M326 324h35M333 322h15M333 327h15",
    // profiles row 1
    "M951 234V263H971L951 234M948 234V275M946 263H973M951 264l-3 8",
    "M1103 232V259H1123L1103 232M1103 232h2",
    "M1154 227V257H1176L1155 227M1154 227h4",
    // profiles row 2
    "M964 352V382H985L966 352M945 382H985M945 352h12M962 352h8M972 352h2M951 366h12M955 373h2",
    "M1039 353V382H1059L1041 353M1041 353V382M1039 386h9V382",
    "M1097 352V382H1117L1098 353M1087 353h10M1086 382h3V374M1107 382v6h9v-6M1120 380h6M1123 385h3",
    "M1155 352V382H1175L1156 353M1147 353h8M1144 367h4M1147 376h3M1179 375h5",
    "M1108 423V452H1128L1109 424M1113 452v15M1108 452V472M1110 452V470M1108 460h22v6h-18",
    // small section
    "M732 353l6 12h22M769 365h20l6-12M738 365l6 8h10M790 365l-6 8h-10M757 355v28l4 6M770 355v28l-4 6M757 372h13M757 382h13M738 378h5M786 378h3",
    // section figure
    "M733 420h56M745 417V455M770 417V455M740 414l10 6M790 414l-10 6",
    "M703 403h15M703 407h14M703 410h12M703 414h13M703 418h10M703 421h16M703 425h14M703 430h10M703 434h14M703 438h10M703 443h12M703 450h14M703 456h11",
    // lower profiles
    "M699 512V540M702 512V540H718L702 512",
    "M803 508V540H859M803 512L820 540",
    "M701 574V600M701 574L718 600H701",
    "M458 702V731H478L460 702",
    "M705 707V735H724L706 707M708 707V740",
    "M706 753V785M708 753L725 785M712 773H762V785M706 785H762M712 778H762",
    "M820 753V785M823 758L838 785M823 785H884M835 772c6-8 14-8 19 0M862 782c3 4 10 4 12 0",
    "M908 755V783H927L909 755",
  ],
  whiteThick: [
    "M805 510L820 538M709 708L722 732M707 755L722 784",
    "M804 538H858",
    "M822 757L836 784",
    "M743 508v6M745 508v6",
    "M759 351v10M763 351v10M767 351v10M760 374v8M767 374v8",
    "M707 403v53M710 403v53",
    "M759 417v10M763 417v10M767 417v10",
    "M725 780h35",
  ],
  cyan: [
    "M761 216h7M762 218h5",
    "M946 233h8M951 238v24M944 263h4M948 262h6",
    "M1149 230h10M1172 250l4-3 2 4M1156 262h10M1157 263h8",
    "M739 362h60M748 354h4M776 357h4M732 375h10M786 375h6M745 349h8M756 343h8M756 345h8M750 383h30M758 389h12M739 372h8M782 372h8M752 362v6M776 362v6",
    "M742 408h14M735 425h12M733 438h14M760 360h6M745 432h12M770 432h12M740 445h10M775 445h10M757 412h10M757 414h10",
    "M846 353h11M846 355h11M846 357h11M846 367h4M846 368h4",
    "M690 510h10M702 512h8M696 538h14M715 538h3M712 530h26M708 545h10M710 548h4M700 520v20M698 535h10",
    "M799 511h6M808 548h10M810 549h6M825 536h10M850 532h3M845 535h8",
    "M695 593h36M697 600h14M699 604h6M704 596h10",
    "M440 702h11M451 702h14M477 726h22M466 731h14M474 728h10",
    "M686 707h11M700 700h10M712 706h5M705 725h4M710 735h6M718 729h18M720 731h10M700 740h8M710 716v12M712 727h8",
    "M712 749h8M712 753h2M700 785h8M708 783h4M720 782h40M715 778h30M720 780h36M712 768h3",
    "M826 749h8M818 755h6M845 783h12M818 786h40M860 778h10M826 770h6M822 780h10",
    "M906 756h5M905 788h10M922 775h5",
    "M763 511v3M764 511v3M771 719h3M771 721h3",
    "M897 647H933M897 645H933L915 633L897 645M900 643h30M915 633V647M907 640h16",
    "M1199 227h4M1203 229h1",
  ],
  red: [
    "M761 365v26M762 365v26",
    "M1090 378l3-12v16h-3zM1126 382v-6l-4-2M1120 374v8",
    "M1154 366v16M1152 374v8",
    "M1098 430l-3 22M1096 452h12M1104 444v8M1122 445l4 7",
    "M762 412v48",
  ],
  magenta: ["M724 408l10 14 14 8 12 8M800 420l-14 12-16 8"],
  gray: "M727 412l10 4 6 14 6 6 10 6 25-6-2 16-20 2-30-4-12-8 9-8-2-8zM728 442l20 12h30l8-10-26 0zM802 412v8l-8 18-6 6-14-6 16-12 8-16z",
};

const DrawingSvg = () => {
  const plans = useMemo(
    () => [buildPlan(286, 222, false), buildPlan(711, 227, true), buildPlan(297, 471, true)],
    []
  );
  return (
    <CanvasSvg width="1181" height="645" viewBox="35 145 1181 645">
      {plans.map((p, i) => (
        <g key={i}>
          <path d={p.yellow} fill="#ffff00" />
          <path d={p.green} fill="#00ff00" />
        </g>
      ))}
      <PlanOverlaySite x={286} y={222} />
      <PlanOverlayDam x={711} y={227} />
      <PlanOverlayDam x={297} y={471} />
      <Section tx={250} ty={311} />
      <Section tx={260} ty={560} />
      <path d="M326 211h35M338 209h15M338 213h8M336 216h4" stroke="#fff" fill="none" />
      <path d="M751 199h35M757 201h17M765 197h6M763 203h3" stroke="#fff" fill="none" />
      <path d={drawing.gray} fill="#808080" />
      <path d={drawing.white.join("")} stroke="#fff" fill="none" />
      <path d={drawing.whiteThick.join("")} stroke="#fff" strokeWidth="2" fill="none" />
      <path d={drawing.cyan.join("")} stroke="#00ffff" fill="none" />
      <path d={drawing.red.join("")} stroke="#ff0000" fill="none" />
      <path d={drawing.magenta.join("")} stroke="#ff00ff" fill="none" />
      <g shapeRendering="auto" stroke="#e8eaec" strokeWidth="1" fill="none">
        <path d="M54.500 672V767.500H152M48 689L54.500 672L61 689M132 761L152 767.500L132 774" />
        <path d="M48 637L54.500 647L61 637M54.500 647V656M168 758L182 777M182 758L168 777" />
      </g>
      <path d="M757 634h43M811 634h43M805.500 587V629M805.500 640V683M800 629h11v11h-11z" stroke="#d9dcdf" fill="none" />
    </CanvasSvg>
  );
};

const DocGlyph = () => (
  <svg width="22" height="24" viewBox="0 0 22 24">
    <path d="M5 1h9l4 4v15H5z" fill="#eef2f6" />
    <rect x="1" y="11" width="20" height="9" fill="#1f6fd0" />
    <text x="11" y="18.500" textAnchor="middle" fontSize="8" fontWeight="700" fill="#fff" fontFamily="Liberation Sans">DWG</text>
    <path d="M5 20h13v2H5z" fill="#8fb9e8" />
  </svg>
);

const Arrow = ({ dir }) => {
  const d = {
    up: "M0 7L4 0l4 7z",
    first: "M0 0h2v8H0zM8 0v8L3 4z",
    prev: "M6 0v8L1 4z",
    next: "M1 0v8l5-4z",
    last: "M6 0h2v8H6zM0 0v8l5-4z",
  }[dir];
  return (
    <svg width="8" height="8" viewBox="0 0 8 8">
      <path d={d} fill={dir === "up" ? "#f0f2f4" : "#8b929a"} />
    </svg>
  );
};

const LAYOUT_TABS = [
  ["A3非溢流坝段", 113],
  ["A3挑流", 72],
  ["A3综合式底流", 113],
  ["A3细部构造", 98],
  ["A2枢纽布置图", 113],
  ["A2下游立视图", 113],
  ["A2细部构造", 99],
  ["A2溢流、非溢流", 128],
];

const CMD_LINES = ["命令:", "命令:", "命令:", "指定对角点:", "命令:", "指定对角点:"];

const PROPS_BASIC = [
  ["线型", "line", "随层"],
  ["线型比例", "", "1"],
  ["线宽", "weight", "0.13 mm"],
  ["透明度", "", "随层"],
  ["厚度", "", "0"],
];
const PROPS_VIEW = [
  ["中心点 X", "-787671.86"],
  ["中心点 Y", "1485077.85"],
  ["中心点 Z", "0"],
  ["高度", "1362148.76"],
  ["宽度", "3257749.87"],
];
const PROPS_OTHER = [
  ["", ""],
  ["打开 UC...", "是"],
  ["在原点...", "是"],
  ["每个视...", "是"],
  ["UCS 名称", ""],
  ["视觉样式", "二维线框"],
];

const NUM_KEYS = ["C", "<--", "sqrt", "/", "1/x", "7", "8", "9", "*", "x^2", "4", "5", "6", "+", "x^3", "1", "2", "3", "-", "x^y", "0", ".", "pi", "(", ")", "=", "MS", "M+", "MR", "MC"];
const SCI_KEYS = ["sin", "cos", "tan", "log", "10^x", "asin", "acos", "atan", "ln", "e^x", "r2d", "d2r", "abs", "rnd", "trunc"];
const VARS = [["k", "Phi"], ["χ", "dee"], ["χ", "ille"], ["χ", "mee"], ["χ", "nee"], ["χ", "rad"], ["χ", "yoo"]];

const renderTb1 = () => {
  const out = [];
  let ml = 0;
  tb1.forEach((item, i) => {
    if (typeof item === "string" && item.startsWith("sep")) {
      out.push(<Sep key={i} $ml={+item.split(":")[1]} />);
    } else if (item === "undo") {
      out.push(
        <UndoGroup key={i}>
          <Ic s={20}><Fl d="M2 9l8-7v4c5 0 8 3 8 9-2-3-4-4-8-4v5z" c={B} /></Ic>
          <DownTri $s={4} />
          <Ic s={20}><Fl d="M18 9l-8-7v4c-5 0-8 3-8 9 2-3 4-4 8-4v5z" c="#aeb3b9" /></Ic>
          <DownTri $s={4} />
        </UndoGroup>
      );
      ml = 7;
    } else {
      out.push(<ToolBtn key={i} $ml={ml}><Ic>{item}</Ic></ToolBtn>);
      ml = 0;
    }
  });
  return out;
};

export default function App() {
  return (
    <>
      <Global />
      <Shell>
        <TitleBar>
          <AppLogo />
          <TitleText>中望CAD 机械版 2024 | 4.dwg主图幅  标准: 图幅:-[ 绘图比例 1:1] - [F:\21年7.10U盘\毕业设计\4重力坝设计\4.dwg]</TitleText>
          <WinButtons>
            <WinButton><svg width="12" height="12"><path d="M1 6h10" stroke="#222" /></svg></WinButton>
            <WinButton><svg width="12" height="12"><path d="M3 3V1h8v8H9M1 3h8v8H1z" stroke="#222" fill="none" /></svg></WinButton>
            <WinButton><XIcon s={12} c="#222" w={1} /></WinButton>
          </WinButtons>
        </TitleBar>
        <MenuBar>
          {["文件(F)", "编辑(E)", "视图(V)", "插入(I)", "格式(O)", "工具(T)", "绘图(D)", "标注(N)", "修改(M)", "扩展工具(X)", "窗口(W)", "帮助(H)", "ArcGIS", "APP+", "机械(J)"].map(m => (
            <span key={m}>{m}</span>
          ))}
        </MenuBar>

        <ToolRow $h={32} $w={1407}>
          <Sep />
          {renderTb1()}
          <Sep $ml={5} />
          <ToolBtn $ml={1}><Ic><Fl d="M6 2L1 18h3l1-4h4l1 4h2L8 2z" c="#e8b53a" /><St d="M12 16l7-10" c={G} w={2} /></Ic></ToolBtn>
          <Combo $w={125} $ml={3}><Sim size={16}>3仿宋</Sim><DownTri $s={5} $auto /></Combo>
          <Sep $ml={5} />
          <ToolBtn><Ic><St d="M2 1v10M18 1v4M2 4h16" c="#e8b53a" /><St d="M6 18l10-10" c={G} w={2} /></Ic></ToolBtn>
          <Combo $w={125}><Sim size={16}>1: 100</Sim><DownTri $s={5} $auto /></Combo>
          <Sep $ml={5} />
          <ToolBtn><Ic><Fl d="M1 2h18v3H1z" c="#77b17c" /><Fl d="M1 6h5v5H1zM7 6h5v5H7zM13 6h6v5h-6zM1 12h5v5H1zM7 12h5v5H7z" c={W} /><St d="M10 19l8-7" c={G} w={2} /></Ic></ToolBtn>
          <Combo $w={125}><Sim size={16}>0.7</Sim><DownTri $s={5} $auto /></Combo>
          <Sep $ml={3} />
          <ToolBtn><Ic><St d="M4 18l-2-8 8-6h6" c={W} /><Dot x={16} y={4} s={5} c={O} /><St d="M8 18l9-10" c={G} w={2} /></Ic></ToolBtn>
          <Combo $w={125} $ml={2}><Sim size={16}>Standard</Sim><DownTri $s={5} $auto /></Combo>
        </ToolRow>

        <ToolRow $h={32} $w={1242}>
          <Sep />
          <ToolBtn><Ic>{iconLayers}</Ic></ToolBtn>
          <Combo $w={375} $ml={2} $pl={1}>
            <LayerIcons>
              <Ic s={20}><Fl d="M10 1c5 0 7 4 6 8-1 3-3 4-4 7H8c-1-3-3-4-4-7-1-4 1-8 6-8z" c="#f5c52b" /><Fl d="M8 17h4v2H8z" c={G} /></Ic>
              <Ic s={20}><circle cx="10" cy="10" r="5" fill="#f3a51f" /><circle cx="10" cy="10" r="9" fill="none" stroke="#f3a51f" strokeWidth="2" strokeDasharray="2 2" /><circle cx="10" cy="10" r="2" fill="#fff3" /></Ic>
              <Ic s={20}><St d="M5 6h12v12H5z" c={W} w={2} /><St d="M1 3l4 4M5 1v4M1 6h3" c={G} w={1} /></Ic>
              <Ic s={20}><St d="M5 9V6c0-6 9-6 9 0" c={B} w={2} /><Fl d="M4 9h13v10H4z" c={B} /><Fl d="M9 12h3v4H9z" c="#fff" /></Ic>
            </LayerIcons>
            <Swatch $s={16} $mr={6} />
            <Sim size={15}>标注</Sim>
            <DownTri $s={5} $auto />
          </Combo>
          <ToolBtn><Ic><St d="M3 6c2-4 12-4 14 0v3H3zM3 13h14M3 17h14" c={W} /><Fl d="M5 2h4v3H5z" c={B} /></Ic></ToolBtn>
          <ToolBtn><Ic><St d="M3 6c2-4 12-4 14 0v3H3zM3 13h14M3 17h14" c={W} /><St d="M7 4h6M7 4l2-2M7 4l2 2" c="#5ed06b" w={1} /></Ic></ToolBtn>
          <ToolBtn><Ic><St d="M3 6c2-4 12-4 14 0v3H3zM3 13h8M3 17h8" c={W} /><Fl d="M11 11h8v8h-8z" c={B} /></Ic></ToolBtn>
          <Sep $ml={5} />
          <Combo $w={193} $ml={3} $pl={6}><Swatch $s={16} $mr={5} /><Sim size={15}>青</Sim><DownTri $s={5} $auto /></Combo>
          <Sep $ml={3} />
          <Combo $w={211} $ml={2} $pl={6}><Rule $w={62} /><Sim size={15}>随层</Sim><DownTri $s={5} $auto /></Combo>
          <Sep $ml={3} />
          <Combo $w={152} $ml={3} $pl={6}><Rule $w={38} /><Sim size={15}>0.13 毫米</Sim><DownTri $s={5} $auto /></Combo>
          <Sep $ml={3} />
          <Combo $w={146} $ml={3} $pl={6} $dim><Sim size={15}>随色</Sim><DownTri $s={5} $c="#8b929a" $auto /></Combo>
        </ToolRow>

        <Main>
          <LeftArea>
            <Workspace>
              <LeftTools>
                {leftIcons.map((ic, i) => (
                  <StackBtn key={i}><Ic s={21}>{ic}</Ic></StackBtn>
                ))}
              </LeftTools>
              <CanvasCol>
                <DocTabs>
                  <DocDrop><DownTri $s={4} /></DocDrop>
                  <DocTab>
                    <DocGlyph />
                    <Sim size={16}>Drawing1.dwg*</Sim>
                  </DocTab>
                  <DocTab $on>
                    <DocGlyph />
                    <Sim size={16}>4. dwg*</Sim>
                    <DocClose><XIcon s={12} w={1.600} /></DocClose>
                  </DocTab>
                  <DocAdd><Ic s={18}><Fl d="M2 1h11l5 5v13H2z" c={W} /><Fl d="M8 9h2V6h2v3h3v2h-3v3h-2v-3H7V9z" c={B} /></Ic></DocAdd>
                </DocTabs>
                <Canvas>
                  <DrawingSvg />
                  <ViewLabel><Sim size={14.500}>[-] [俯视] [二维线框] [未命名 UCS]</Sim></ViewLabel>
                  <ViewCtrl>
                    <svg width="10" height="10"><path d="M0 6h10v2H0z" fill="#d8d8d8" /></svg>
                    <svg width="10" height="10"><path d="M2 2V0h8v7H8M0 2h8v8H0zM2 4v4h4V4z" fill="#d8d8d8" fillRule="evenodd" /></svg>
                    <XIcon s={10} c="#d8d8d8" w={2} />
                  </ViewCtrl>
                </Canvas>
                <LayoutTabs>
                  <NavBtn><Arrow dir="up" /></NavBtn>
                  <NavBtn><Arrow dir="first" /></NavBtn>
                  <NavBtn><Arrow dir="prev" /></NavBtn>
                  <NavBtn><Arrow dir="next" /></NavBtn>
                  <NavBtn><Arrow dir="last" /></NavBtn>
                  <LayoutTab $w={59} $on><Sim size={15} bold>模型</Sim></LayoutTab>
                  {LAYOUT_TABS.map(([t, w]) => (
                    <LayoutTab key={t} $w={w}><Sim size={14}>{t}</Sim></LayoutTab>
                  ))}
                  <LayoutTab $w={38}>+</LayoutTab>
                </LayoutTabs>
              </CanvasCol>
              <DockPair>
                <DockCol $h={524}>
                  {dockA.map((ic, i) => (
                    <StackBtn key={i}><Ic s={22}>{ic}</Ic></StackBtn>
                  ))}
                </DockCol>
                <DockCol $h={388}>
                  {dockB.map((ic, i) => (
                    <StackBtn key={i}><Ic s={22} fly>{ic}</Ic></StackBtn>
                  ))}
                </DockCol>
              </DockPair>
            </Workspace>
            <Command>
              <CmdStrip><XIcon s={12} c="#6d7783" w={2} /></CmdStrip>
              <CmdBody>
                <CmdHistory>
                  <CmdLines>
                    {CMD_LINES.map((l, i) => (
                      <CmdLine key={i}><Sim size={19}>{l}</Sim></CmdLine>
                    ))}
                  </CmdLines>
                  <VScroll>
                    <Chev up />
                    <ScrollThumb $top={67} $h={68} />
                    <Chev />
                  </VScroll>
                </CmdHistory>
                <CmdInput><Sim size={19}>命令:</Sim><Caret /></CmdInput>
              </CmdBody>
            </Command>
          </LeftArea>

          <Panel $w={278} $ml={6}>
            <PanelHead>特性<XIcon /></PanelHead>
            <PropBody>
              <SelectRow>
                <SelectBox>无选择<DownTri $s={5} $auto /></SelectBox>
                <SelectIcons>
                  <Ic s={20}><St d="M2 2h10v10H2z" c={W} w={1} /><St d="M6 6h11v12H6z" c={W} w={1} /><St d="M11 9v6M8 12h6" c={W} w={1} /></Ic>
                  <Ic s={22}><Fl d="M7 1h10v12H7z" c={B} /><St d="M3 12a5 5 0 1 0 7 6" c={G} /><St d="M14 14l3 5" c={W} w={1} /></Ic>
                  <Ic s={20}><St d="M3 3l4 13 3-5 5 4" c={W} w={1.200} /><Fl d="M13 6h4l-3 5h4l-6 7 2-6h-3z" c="#e8c53a" /></Ic>
                </SelectIcons>
              </SelectRow>
              <SectionHead>基本<DownTri $s={6} $auto /></SectionHead>
              <PropRow><PropLabel>颜色</PropLabel><PropValue><Swatch $s={12} $mr={2} />青</PropValue></PropRow>
              <PropRow><PropLabel>图层</PropLabel><PropValue>标注</PropValue></PropRow>
              {PROPS_BASIC.map(([k, kind, v]) => (
                <PropRow key={k}>
                  <PropLabel>{k}</PropLabel>
                  <PropValue>
                    {kind === "line" && <Rule $w={45} />}
                    {kind === "weight" && <Rule $w={41} />}
                    {v}
                  </PropValue>
                </PropRow>
              ))}
              <SectionHead $mt={6}>视图<DownTri $s={6} $auto /></SectionHead>
              {PROPS_VIEW.map(([k, v]) => (
                <PropRow key={k}><PropLabel>{k}</PropLabel><PropValue $dim $num>{v}</PropValue></PropRow>
              ))}
              <SectionHead $mt={5}>其他<DownTri $s={6} $auto /></SectionHead>
              {PROPS_OTHER.map(([k, v], i) => (
                <PropRow key={i}><PropLabel>{k}</PropLabel><PropValue>{v}</PropValue></PropRow>
              ))}
            </PropBody>
          </Panel>

          <Panel $w={350} $ml={6}>
            <PanelHead $pl={19} $pr={13}>计算器<XIcon /></PanelHead>
            <CalcWrap>
              <CalcBody>
                <IconRow>
                  {calcIcons.map((ic, i) => (
                    <IconBox key={i}><Ic s={20}>{ic}</Ic></IconBox>
                  ))}
                </IconRow>
                <OutBox $h={96} $mb={5} />
                <OutBox $h={24} $mb={11} />
                <CalcLabel $mb={3}>数字键区&lt;&lt;</CalcLabel>
                <KeyGrid>
                  {NUM_KEYS.map(k => <Key key={k}>{k}</Key>)}
                </KeyGrid>
                <CalcLabel $mt={17} $mb={3}>科学&lt;&lt;</CalcLabel>
                <KeyGrid>
                  {SCI_KEYS.map(k => <Key key={k}>{k}</Key>)}
                </KeyGrid>
                <CalcLabel $mt={18} $mb={1}>变量&lt;&lt;</CalcLabel>
                <VarTools>
                  <VarBtn $on>χ<Sup>+</Sup></VarBtn>
                  <VarBtn>χ<Sup>+</Sup></VarBtn>
                  <VarBtn $c="#8b929a">χ</VarBtn>
                  <VarBtn><Ic s={18}><Fl d="M3 1h14v18H3z" c="#d8dce0" /><St d="M5 7h3M9 7h2M12 7h3M5 11h3M9 11h2M12 11h3M5 15h3M9 15h2M12 15h3" c="#414a55" /></Ic></VarBtn>
                </VarTools>
                <TreeBox>
                  <TreeList>
                    <TreeHead>
                      <MinusBox />
                      <Ic s={22}><Fl d="M2 4h6l2 2h8v11H2z" c="#f0ae63" /><Fl d="M2 2h6v3H2z" c="#f7cf96" /></Ic>
                      <TreeName>变量样例</TreeName>
                    </TreeHead>
                    {VARS.map(([m, n]) => (
                      <TreeRow key={n}>
                        <VarMark $k={m === "k"}>{m}</VarMark>
                        <span>{n}</span>
                      </TreeRow>
                    ))}
                  </TreeList>
                  <VScroll $w={20}>
                    <Chev up />
                    <ScrollThumb $top={22} $h={96} />
                    <Chev />
                  </VScroll>
                </TreeBox>
                <CalcLabel $mt={1} $mb={5}>详细信息</CalcLabel>
                <DetailBox />
              </CalcBody>
              <VScroll $w={13}>
                <Chev up />
                <ScrollThumb $top={25} $h={85} />
                <Chev />
              </VScroll>
            </CalcWrap>
          </Panel>

          <FloatBar>
            <FloatGrip />
            {floatGroups.map((grp, i) => (
              <React.Fragment key={i}>
                {i > 0 && <Sep />}
                {grp.map((ic, j) => (
                  <FloatIcon key={j}><Ic s={22}>{ic}</Ic></FloatIcon>
                ))}
              </React.Fragment>
            ))}
            <FloatClose><XIcon s={11} w={2} /></FloatClose>
          </FloatBar>
        </Main>

        <StatusBar>
          <Coords><Sim size={16}>-94697.68, 431994.98, 0.00</Sim></Coords>
          <StatusIcons>
            {statusIcons.map(([ic, on], i) => (
              <StatusBtn key={i} $on={on}><Ic s={20}>{ic}</Ic></StatusBtn>
            ))}
          </StatusIcons>
          <StatusRight>
            <AppLogo s={20} id="zw2" />
            <StatusGap $ml={6}><Ic s={20}><St d="M1 2h18M1 18h18M1 1v18" c={B} w={1} /><text x="2" y="14" fontSize="9" fill={G} fontFamily="Liberation Sans">0.0</text></Ic></StatusGap>
            <StatusGap $ml={4}>毫米</StatusGap>
            <StatusGap $ml={6}><DownTri $s={5} /></StatusGap>
            <StatusGap $ml={10}><Ic s={20}><Fl d="M10 1l3 8 4 9-6-3-1 4-1-4-6 3 4-9z" c="#9fd0f5" /></Ic></StatusGap>
            <StatusGap $ml={4}>1:1</StatusGap>
            <StatusGap $ml={10}><DownTri $s={5} /></StatusGap>
            {statusRight.map((ic, i) => (
              <StatusGap key={i} $ml={i === 0 ? 11 : 6}><Ic s={20}>{ic}</Ic></StatusGap>
            ))}
          </StatusRight>
          <Watermark>@云筑资源网 yzyw.com</Watermark>
        </StatusBar>
        <TaskStrip>
          <TaskThumb />
          <Clock>19:33</Clock>
        </TaskStrip>

        <NetBadge>
          <NetLine $c="#f3941e">↑  378 KB/s</NetLine>
          <NetLine $c="#7ed321">↓  0.0 KB/s</NetLine>
        </NetBadge>
      </Shell>
    </>
  );
}
